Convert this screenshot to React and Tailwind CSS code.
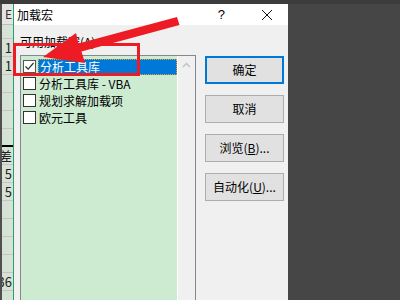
import React from 'react';

const font = { fontFamily: '"Noto Sans CJK SC", "Microsoft YaHei", sans-serif' };

const stripRows = [
  { h: 14, text: '' },
  { h: 18, text: '1' },
  { h: 18, text: '1' },
  { h: 18, text: '' },
  { h: 18, text: '' },
  { h: 18, text: '' },
  { h: 18, text: '', thick: true },
  { h: 18, text: '差' },
  { h: 18, text: '5' },
  { h: 18, text: '5' },
  { h: 18, text: '' },
  { h: 18, text: '' },
  { h: 18, text: '' },
  { h: 18, text: '' },
  { h: 18, text: '36' },
];

const items = [
  { label: '分析工具库', checked: true, selected: true },
  { label: '分析工具库 - VBA' },
  { label: '规划求解加载项' },
  { label: '欧元工具' },
];

const CheckBox = ({ checked }) => (
  <div className={`w-[13px] h-[13px] shrink-0 bg-white border ${checked ? 'border-[#555]' : 'border-[#333]'} flex items-center justify-center`}>
    {checked && (
      <svg width="11" height="11" viewBox="0 0 11 11">
        <path d="M1.5 5.5 L4.2 8.2 L9.5 2" fill="none" stroke="#333" strokeWidth="1.2" />
      </svg>
    )}
  </div>
);

const Button = ({ children, primary }) => (
  <div
    className={`w-[79px] h-[28px] bg-[#e1e1e1] flex items-center justify-center text-[12px] text-black ${
      primary ? 'border-2 border-[#0078d7]' : 'border border-[#adadad]'
    }`}
  >
    {children}
  </div>
);

export default function App() {
  return (
    <div className="relative w-[400px] h-[300px] bg-[#464646] flex flex-col overflow-hidden" style={font}>
      <div className="h-[4px] bg-[#3c3c3c] shrink-0" />
      <div className="flex flex-1 min-h-0">
        {/* spreadsheet behind */}
        <div className="w-[13px] flex flex-col bg-[#d6e2d6] border-l-2 border-[#505050] overflow-hidden">
          <div className="h-[21px] shrink-0 bg-[#e4e4e4] border-b border-[#bdbdbd] flex items-center justify-end pr-[1px] text-[12px] text-[#333] leading-none">
            E
          </div>
          {stripRows.map((r, i) => (
            <div
              key={i}
              className={`shrink-0 flex items-center justify-end pr-[1px] text-[13px] text-[#222] leading-none whitespace-nowrap border-b border-[#cbbfc8] ${
                r.thick ? 'border-b-2 border-b-black' : ''
              }`}
              style={{ height: r.h }}
            >
              {r.text}
            </div>
          ))}
        </div>
        <div className="w-[1px] bg-[#21a366]" />

        {/* dialog */}
        <div className="w-[274px] flex flex-col">
          <div className="h-[21px] bg-white flex items-center pl-[3px] text-[12px] text-black shrink-0">
            <span>加载宏</span>
            <span className="ml-auto mr-[36px] text-[13px]" style={{ fontFamily: '"Liberation Sans", sans-serif' }}>?</span>
            <svg width="12" height="12" viewBox="0 0 12 12" className="mr-[15px]">
              <path d="M1 1 L11 11 M11 1 L1 11" stroke="#111" strokeWidth="1" />
            </svg>
          </div>
          <div className="flex-1 bg-[#f0f0f0] flex min-h-0">
            <div className="ml-[6px] w-[176px] flex flex-col pt-[9px]">
              <div className="h-[16px] leading-[16px] text-[12px] text-black mb-[5px]">
                可用加载宏(<u>A</u>):
              </div>
              <div className="flex-1 flex border border-b-0 border-[#828790]">
                <div className="flex-1 bg-[#cdebd0] border-r border-white pt-[2px]">
                  {items.map((it, i) => (
                    <div key={i} className="h-[17px] flex items-center pl-[2px]">
                      <CheckBox checked={it.checked} />
                      <div
                        className={`ml-[2px] h-[16px] flex-1 flex items-center pl-[1px] text-[12px] whitespace-nowrap ${
                          it.selected ? 'bg-[#0078d7] text-white border border-dotted border-[#f0a030]' : 'text-black'
                        }`}
                      >
                        {it.label}
                      </div>
                    </div>
                  ))}
                </div>
                <div className="w-[17px] flex justify-center pt-[6px]">
                  <svg width="9" height="6" viewBox="0 0 9 6">
                    <path d="M1 5 L4.5 1.5 L8 5" fill="none" stroke="#c2c2c2" strokeWidth="1.5" />
                  </svg>
                </div>
              </div>
            </div>
            <div className="ml-[9px] pt-[31px] flex flex-col gap-[11px]">
              <Button primary>确定</Button>
              <Button>取消</Button>
              <Button>浏览(<u>B</u>)...</Button>
              <Button>自动化(<u>U</u>)...</Button>
            </div>
          </div>
        </div>
      </div>

      {/* annotation overlay */}
      <svg className="absolute left-0 top-0" width="400" height="300" viewBox="0 0 400 300">
        <rect x="14.5" y="44.5" width="124" height="30" fill="none" stroke="#ed1c24" strokeWidth="3" />
        <polygon
          points="43,57 76,33 78.5,43.5 177,17 179.5,25 81.5,51.5 85,63"
          fill="#ed1c24"
        />
      </svg>
    </div>
  );
}
